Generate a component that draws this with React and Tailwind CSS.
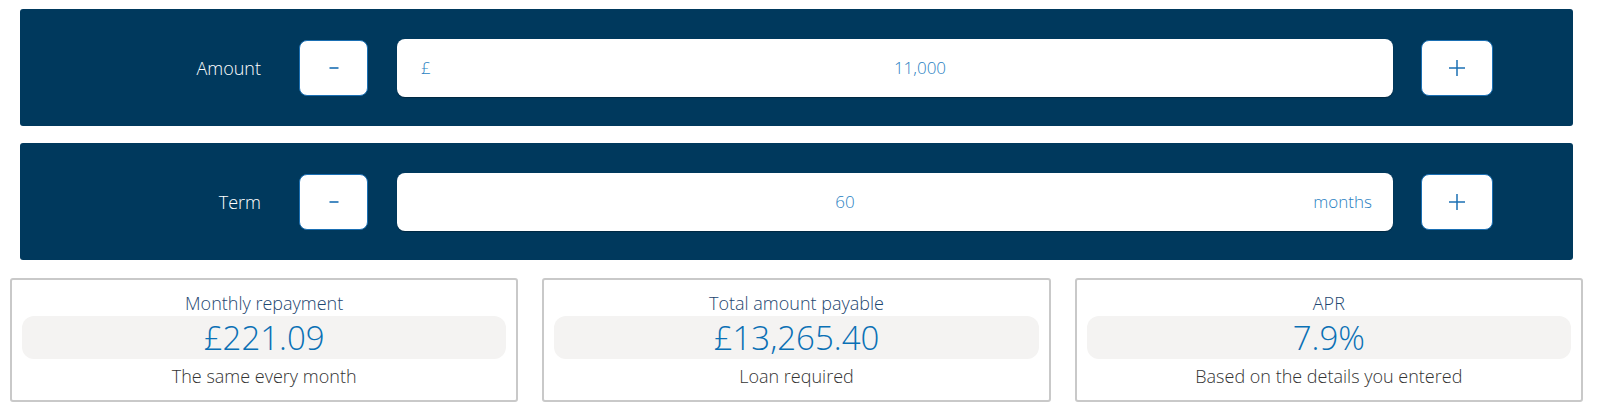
import React from "react";

const font = { fontFamily: '"Open Sans", "Noto Sans", Arial, sans-serif' };

function Minus() {
  return (
    <svg width="12" height="4" viewBox="0 0 12 4">
      <line x1="1.5" y1="2" x2="10.5" y2="2" stroke="#1a6fb3" strokeWidth="1.6" />
    </svg>
  );
}
function Plus() {
  return (
    <svg width="18" height="18" viewBox="0 0 18 18">
      <line x1="1" y1="9" x2="17" y2="9" stroke="#1a6fb3" strokeWidth="1.5" />
      <line x1="9" y1="1" x2="9" y2="17" stroke="#1a6fb3" strokeWidth="1.5" />
    </svg>
  );
}

function Row({ label, children }) {
  return (
    <div className="flex items-center h-[117px] bg-[#00395d] rounded-[3px] ml-[20px] w-[1553px]">
      <div className="w-[241px] text-right text-white text-[18px] leading-[24px] font-light">{label}</div>
      <button className="ml-[38px] w-[69px] h-[56px] bg-white rounded-[8px] border-[1.5px] border-[#1a6fb3] flex items-center justify-center">
        <Minus />
      </button>
      <div className="ml-[29px] w-[996px] h-[58px] bg-white rounded-[8px] shadow-[0_1px_1px_rgba(0,0,0,0.3)] flex items-center text-[17px] font-light text-[#2a7fc2]">
        {children}
      </div>
      <button className="ml-[28px] w-[72px] h-[56px] bg-white rounded-[8px] border-[1.5px] border-[#1a6fb3] flex items-center justify-center">
        <Plus />
      </button>
    </div>
  );
}

function Card({ title, value, sub }) {
  return (
    <div className="border-2 border-[#c9c9c9] rounded-[3px] pt-[12px] pb-[13px] px-[10px] flex flex-col items-stretch text-center bg-white font-light">
      <div className="text-[18px] leading-[22px] text-[#1d4670]">{title}</div>
      <div className="mt-[2px] h-[43px] rounded-[12px] bg-[#f4f3f2] text-[33px] leading-[43px] font-light text-[#0a70b5]">{value}</div>
      <div className="mt-[6px] text-[18px] leading-[22px] text-[#333333]">{sub}</div>
    </div>
  );
}

export default function App() {
  return (
    <div className="w-[1600px] h-[409px] bg-white pt-[9px]" style={font}>
      <Row label="Amount">
        <div className="w-[50px] pl-[24px]">£</div>
        <div className="flex-1 text-center">11,000</div>
      </Row>
      <div className="h-[17px]" />
      <Row label="Term">
        <div className="flex-1 text-center">60</div>
        <div className="w-[100px] text-right pr-[21px]">months</div>
      </Row>
      <div className="grid grid-cols-3 gap-[24px] pl-[10px] w-[1583px] mt-[18px]">
        <Card title="Monthly repayment" value="£221.09" sub="The same every month" />
        <Card title="Total amount payable" value="£13,265.40" sub="Loan required" />
        <Card title="APR" value="7.9%" sub="Based on the details you entered" />
      </div>
    </div>
  );
}
